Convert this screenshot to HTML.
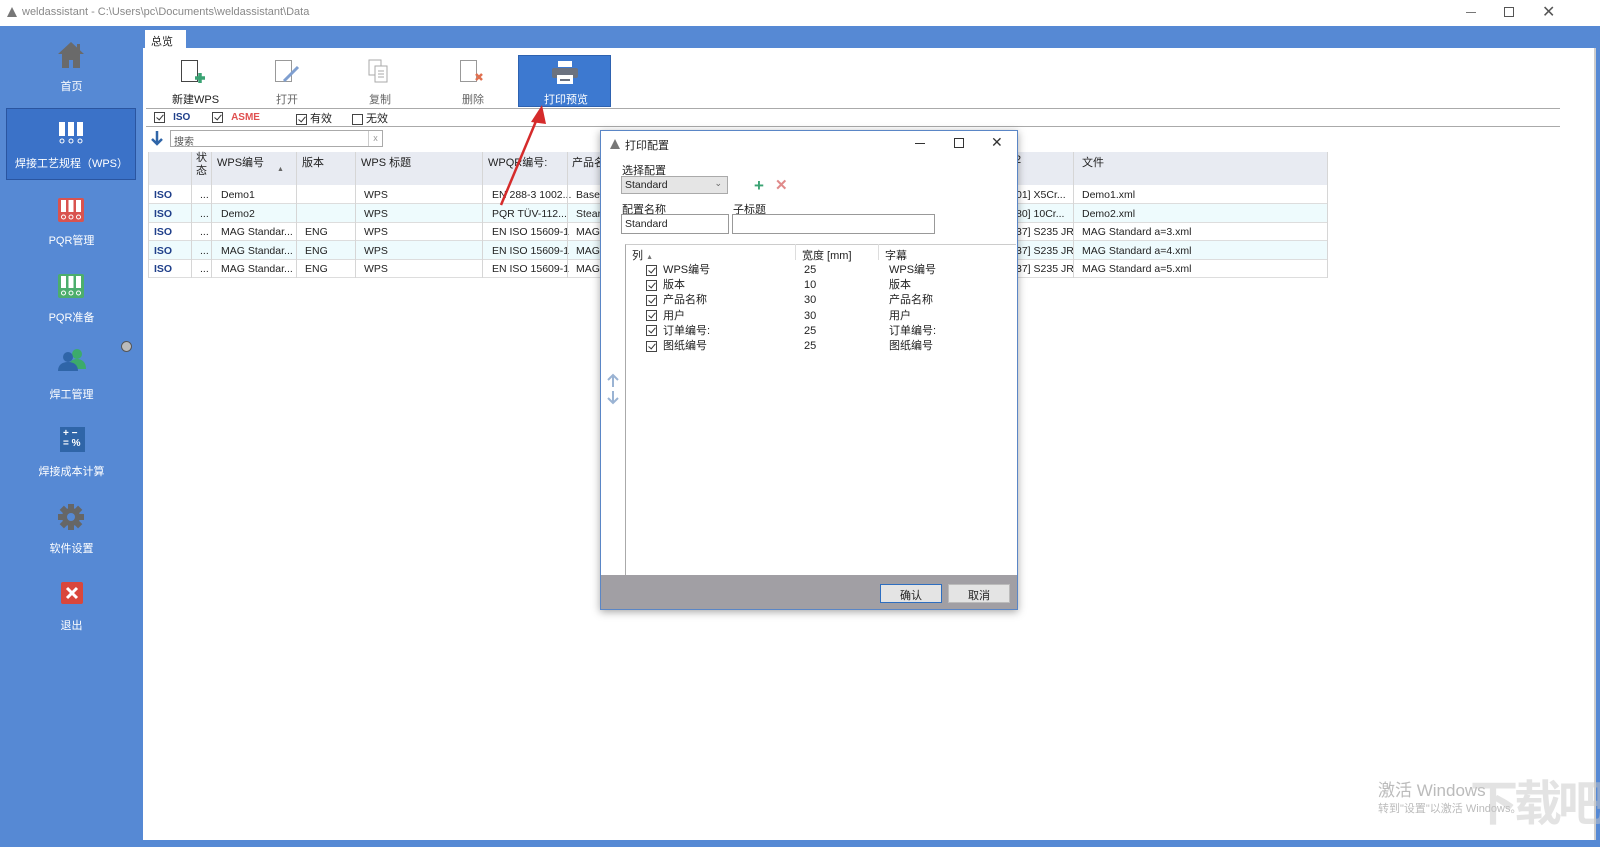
<!DOCTYPE html>
<html><head><meta charset="utf-8"><style>
*{box-sizing:border-box;margin:0;padding:0}
html,body{width:1600px;height:847px;overflow:hidden}
body{background:#fff;font-family:"Liberation Sans","Noto Sans CJK SC",sans-serif;font-size:11px;color:#222;position:relative}
.a{position:absolute;white-space:nowrap}
.side{left:0;top:26px;width:1600px;height:821px;background:#5689d4}
.nav{position:absolute;left:0;width:143px;text-align:center;color:#fff;font-size:11px}
.cb{display:inline-block;width:11px;height:11px;border:1px solid #444;background:#fff;position:relative;vertical-align:middle;margin-right:3px}
.cb::after{content:"";position:absolute;left:3px;top:0px;width:3px;height:6px;border:solid #333;border-width:0 1px 1px 0;transform:rotate(40deg)}
.cb.e::after{display:none}
.row{position:absolute;left:148px;width:1179px;height:19px;border-bottom:1px solid #ddd;font-size:10.5px}
.row span{position:absolute;top:4px;white-space:nowrap}
.hd span{position:absolute;top:2px}
.vl{position:absolute;top:152px;width:1px;height:126px;background:#d6d6d6}
</style></head><body>
<div class="a" style="left:0;top:0;width:1600px;height:26px;background:#fff"></div>
<svg class="a" style="left:6px;top:6px" width="12" height="12"><path d="M6 1L11 11H1Z" fill="#777"/></svg>
<div class="a" style="left:22px;top:6px;color:#888;font-size:11px">weldassistant - C:\Users\pc\Documents\weldassistant\Data</div>
<div class="a" style="left:1466px;top:12px;width:10px;height:1px;background:#777"></div>
<div class="a" style="left:1504px;top:7px;width:10px;height:10px;border:1px solid #555"></div>
<div class="a" style="left:1542px;top:2px;font-size:16px;color:#555">✕</div>
<div class="a side"></div>
<div class="a" style="left:145px;top:30px;width:41px;height:20px;background:#fff;font-size:11px;padding:3px 0 0 6px">总览</div>
<div class="a" style="left:143px;top:48px;width:1453px;height:792px;background:#fff;border-right:2px solid #ccc"></div>
<svg class="a" style="left:56px;top:40px" width="30" height="30"><path d="M15 2L2 14h4v14h7v-8h4v8h7V14h4z" fill="#6a6a6a"/><rect x="21" y="4" width="3" height="7" fill="#6a6a6a"/></svg>
<div class="nav" style="top:78px">首页</div>
<div class="a" style="left:6px;top:108px;width:130px;height:72px;background:#3b72c8;border:1px solid #2a55a0"></div>
<svg class="a" style="left:58px;top:122px" width="26" height="24"><g fill="#fff"><rect x="1" y="0" width="6" height="14"/><rect x="10" y="0" width="6" height="14"/><rect x="19" y="0" width="6" height="14"/></g><g fill="none" stroke="#fff"><circle cx="4" cy="19" r="2"/><circle cx="13" cy="19" r="2"/><circle cx="22" cy="19" r="2"/></g></svg>
<div class="nav" style="top:155px">焊接工艺规程（WPS）</div>
<svg class="a" style="left:58px;top:198px" width="26" height="24"><rect x="0" y="0" width="26" height="24" rx="2" fill="#d9534f"/><g fill="#fff"><rect x="3" y="2" width="5" height="12"/><rect x="10.5" y="2" width="5" height="12"/><rect x="18" y="2" width="5" height="12"/></g><g fill="none" stroke="#fff"><circle cx="5.5" cy="19" r="2"/><circle cx="13" cy="19" r="2"/><circle cx="20.5" cy="19" r="2"/></g></svg>
<div class="nav" style="top:232px">PQR管理</div>
<svg class="a" style="left:58px;top:274px" width="26" height="24"><rect x="0" y="0" width="26" height="24" rx="2" fill="#4cae6c"/><g fill="#fff"><rect x="3" y="2" width="5" height="12"/><rect x="10.5" y="2" width="5" height="12"/><rect x="18" y="2" width="5" height="12"/></g><g fill="none" stroke="#fff"><circle cx="5.5" cy="19" r="2"/><circle cx="13" cy="19" r="2"/><circle cx="20.5" cy="19" r="2"/></g></svg>
<div class="nav" style="top:309px">PQR准备</div>
<div class="a" style="left:121px;top:341px;width:11px;height:11px;border-radius:50%;background:#bbb;border:1px solid #555"></div>
<svg class="a" style="left:57px;top:347px" width="30" height="24"><circle cx="20" cy="7" r="5" fill="#3cab6b"/><path d="M11 22c0-7 4-10 9-10s9 3 9 10z" fill="#3cab6b"/><circle cx="11" cy="10" r="5" fill="#2f65a8"/><path d="M1 24c0-6 4-9 10-9s10 3 10 9z" fill="#2f65a8"/></svg>
<div class="nav" style="top:386px">焊工管理</div>
<div class="a" style="left:60px;top:427px;width:25px;height:25px;background:#2f65a8;color:#fff;font-size:10px;font-weight:bold;line-height:10px;padding:2px 0 0 3px">+ −<br>= %</div>
<div class="nav" style="top:463px">焊接成本计算</div>
<svg class="a" style="left:57px;top:503px" width="28" height="28" viewBox="-14 -14 28 28"><g fill="#666"><circle r="9"/><g id="t"><rect x="-3" y="-13" width="6" height="6"/></g><use href="#t" transform="rotate(45)"/><use href="#t" transform="rotate(90)"/><use href="#t" transform="rotate(135)"/><use href="#t" transform="rotate(180)"/><use href="#t" transform="rotate(225)"/><use href="#t" transform="rotate(270)"/><use href="#t" transform="rotate(315)"/></g><circle r="4" fill="#5689d4"/></svg>
<div class="nav" style="top:540px">软件设置</div>
<svg class="a" style="left:61px;top:582px" width="22" height="22"><rect width="22" height="22" rx="2" fill="#d9473c"/><path d="M6 6l10 10M16 6L6 16" stroke="#fff" stroke-width="3"/></svg>
<div class="nav" style="top:617px">退出</div>
<svg class="a" style="left:179px;top:59px" width="28" height="26"><rect x="2.5" y="1.5" width="16" height="21" fill="#fff" stroke="#444"/><path d="M21 14v10M16 19h10" stroke="#3aa373" stroke-width="3.5"/></svg>
<div class="a" style="left:172px;top:91px;font-size:11px">新建WPS</div>
<svg class="a" style="left:274px;top:59px" width="28" height="26"><rect x="1.5" y="1.5" width="16" height="21" fill="#fff" stroke="#999"/><path d="M10 22l14-14" stroke="#7f9fd0" stroke-width="3"/></svg>
<div class="a" style="left:276px;top:91px;color:#666">打开</div>
<svg class="a" style="left:367px;top:59px" width="26" height="26"><rect x="2" y="1" width="12" height="15" fill="#fff" stroke="#aaa"/><rect x="8" y="7" width="12" height="16" fill="#fff" stroke="#aaa"/><path d="M11 12h6M11 15h6M11 18h6" stroke="#aaa"/></svg>
<div class="a" style="left:369px;top:91px;color:#666">复制</div>
<svg class="a" style="left:459px;top:59px" width="28" height="26"><rect x="1.5" y="1.5" width="16" height="21" fill="#fff" stroke="#999"/><path d="M17 15l6 6M23 15l-6 6" stroke="#e07050" stroke-width="2.5"/></svg>
<div class="a" style="left:462px;top:91px;color:#666">删除</div>
<div class="a" style="left:518px;top:55px;width:93px;height:52px;background:#3d79d0;border:1px solid #2e62b0"></div>
<svg class="a" style="left:551px;top:60px" width="28" height="26"><rect x="7" y="1" width="14" height="6" fill="#fff"/><rect x="1" y="8" width="26" height="10" rx="2" fill="#6b7280"/><rect x="6" y="15" width="16" height="9" fill="#fff"/><rect x="9" y="19" width="10" height="2" fill="#6b7280"/></svg>
<div class="a" style="left:544px;top:91px;color:#fff">打印预览</div>
<div class="a" style="left:146px;top:108px;width:1414px;height:1px;background:#aaa"></div>
<div class="a" style="left:146px;top:126px;width:1414px;height:1px;background:#aaa"></div>
<div class="a" style="left:154px;top:111px"><span class="cb"></span> <b style="color:#1f3f8a;font-size:10px;margin-left:2px">ISO</b></div>
<div class="a" style="left:212px;top:111px"><span class="cb"></span> <b style="color:#e05050;font-size:10px;margin-left:2px">ASME</b></div>
<div class="a" style="left:296px;top:110px"><span class="cb"></span>有效</div>
<div class="a" style="left:352px;top:110px"><span class="cb e"></span>无效</div>
<svg class="a" style="left:150px;top:130px" width="14" height="16"><path d="M7 1v13M2 9l5 5 5-5" stroke="#2f65a8" stroke-width="2.5" fill="none"/></svg>
<div class="a" style="left:170px;top:130px;width:213px;height:17px;border:1px solid #aaa;color:#555;padding:2px 3px;font-size:10px">搜索</div>
<div class="a" style="left:368px;top:131px;width:14px;height:15px;border-left:1px solid #ccc;color:#999;font-size:9px;text-align:center;padding-top:2px">x</div>
<div class="a" style="left:148px;top:152px;width:1179px;height:33px;background:#e8ebf2"></div>
<div class="a hd" style="left:148px;top:152px;width:1179px;height:33px">
<span style="left:48px;top:0;line-height:13px">状<br>态</span><span style="left:69px">WPS编号</span><span style="left:129px;top:14px;font-size:7px;color:#666">▲</span><span style="left:154px">版本</span><span style="left:213px">WPS 标题</span><span style="left:340px">WPQR编号:</span><span style="left:424px">产品名</span><span style="left:867px">2</span><span style="left:934px">文件</span></div>
<div class="row" style="top:185px"><span style="left:6px;color:#1f3f8a;font-weight:bold">ISO</span><span style="left:52px">...</span><span style="left:73px">Demo1</span><span style="left:216px">WPS</span><span style="left:344px">EN 288-3 1002...</span><span style="left:428px">Basef</span><span style="left:868px">01] X5Cr...</span><span style="left:934px">Demo1.xml</span></div>
<div class="row" style="top:204px;background:#eefbfd"><span style="left:6px;color:#1f3f8a;font-weight:bold">ISO</span><span style="left:52px">...</span><span style="left:73px">Demo2</span><span style="left:216px">WPS</span><span style="left:344px">PQR TÜV-112...</span><span style="left:428px">Steam</span><span style="left:868px">80] 10Cr...</span><span style="left:934px">Demo2.xml</span></div>
<div class="row" style="top:222px"><span style="left:6px;color:#1f3f8a;font-weight:bold">ISO</span><span style="left:52px">...</span><span style="left:73px">MAG Standar...</span><span style="left:157px">ENG</span><span style="left:216px">WPS</span><span style="left:344px">EN ISO 15609-1</span><span style="left:428px">MAG</span><span style="left:868px">37] S235 JR</span><span style="left:934px">MAG Standard a=3.xml</span></div>
<div class="row" style="top:241px;background:#eefbfd"><span style="left:6px;color:#1f3f8a;font-weight:bold">ISO</span><span style="left:52px">...</span><span style="left:73px">MAG Standar...</span><span style="left:157px">ENG</span><span style="left:216px">WPS</span><span style="left:344px">EN ISO 15609-1</span><span style="left:428px">MAG</span><span style="left:868px">37] S235 JR</span><span style="left:934px">MAG Standard a=4.xml</span></div>
<div class="row" style="top:259px"><span style="left:6px;color:#1f3f8a;font-weight:bold">ISO</span><span style="left:52px">...</span><span style="left:73px">MAG Standar...</span><span style="left:157px">ENG</span><span style="left:216px">WPS</span><span style="left:344px">EN ISO 15609-1</span><span style="left:428px">MAG</span><span style="left:868px">37] S235 JR</span><span style="left:934px">MAG Standard a=5.xml</span></div>
<div class="vl" style="left:148px"></div><div class="vl" style="left:191px"></div><div class="vl" style="left:211px"></div><div class="vl" style="left:296px"></div><div class="vl" style="left:355px"></div><div class="vl" style="left:482px"></div><div class="vl" style="left:567px"></div><div class="vl" style="left:1073px"></div><div class="vl" style="left:1327px"></div>
<svg class="a" style="left:495px;top:100px" width="60" height="110"><path d="M6 105L44 14" stroke="#d52b2b" stroke-width="2.5"/><path d="M47 5L36 22L51 24Z" fill="#d52b2b"/></svg>
<div class="a" style="left:600px;top:130px;width:418px;height:480px;background:#fff;border:1px solid #5a86c6;box-shadow:0 2px 8px rgba(0,0,0,.35)"></div>
<svg class="a" style="left:609px;top:138px" width="12" height="12"><path d="M6 1L11 11H1Z" fill="#777"/></svg>
<div class="a" style="left:625px;top:137px">打印配置</div>
<div class="a" style="left:915px;top:143px;width:10px;height:1px;background:#333"></div>
<div class="a" style="left:954px;top:138px;width:10px;height:10px;border:1px solid #333"></div>
<div class="a" style="left:991px;top:134px;font-size:14px;color:#333">✕</div>
<div class="a" style="left:622px;top:162px">选择配置</div>
<div class="a" style="left:621px;top:176px;width:107px;height:18px;background:#e5e5e5;border:1px solid #aaa;padding:2px 3px;font-size:10.5px">Standard<span style="position:absolute;right:5px;top:1px;color:#666;font-size:9px">⌄</span></div>
<div class="a" style="left:754px;top:176px;color:#3aa373;font-size:17px;font-weight:bold;line-height:20px">+</div>
<div class="a" style="left:775px;top:177px;color:#e08a8a;font-size:15px;font-weight:bold;line-height:18px">✕</div>
<div class="a" style="left:622px;top:201px">配置名称</div>
<div class="a" style="left:733px;top:201px">子标题</div>
<div class="a" style="left:621px;top:214px;width:108px;height:20px;border:1px solid #999;padding:3px 3px;font-size:10.5px">Standard</div>
<div class="a" style="left:732px;top:214px;width:203px;height:20px;border:1px solid #999"></div>
<div class="a" style="left:625px;top:244px;width:391px;height:331px;border-left:1px solid #aaa;border-top:1px solid #ccc"></div>
<div class="a" style="left:632px;top:247px">列 <span style="font-size:7px;color:#777">▲</span></div>
<div class="a" style="left:795px;top:244px;width:1px;height:16px;background:#ddd"></div>
<div class="a" style="left:878px;top:244px;width:1px;height:16px;background:#ddd"></div>
<div class="a" style="left:802px;top:247px">宽度 [mm]</div>
<div class="a" style="left:885px;top:247px">字幕</div>
<div class="a" style="left:646px;top:263px;line-height:15.2px"><span class="cb"></span> WPS编号<br><span class="cb"></span> 版本<br><span class="cb"></span> 产品名称<br><span class="cb"></span> 用户<br><span class="cb"></span> 订单编号:<br><span class="cb"></span> 图纸编号</div>
<div class="a" style="left:804px;top:263px;line-height:15.2px">25<br>10<br>30<br>30<br>25<br>25</div>
<div class="a" style="left:889px;top:263px;line-height:15.2px">WPS编号<br>版本<br>产品名称<br>用户<br>订单编号:<br>图纸编号</div>
<svg class="a" style="left:606px;top:373px" width="14" height="32"><path d="M7 2v12M2 7l5-5 5 5M7 18v12M2 25l5 5 5-5" stroke="#9ab3d3" stroke-width="2" fill="none"/></svg>
<div class="a" style="left:601px;top:575px;width:416px;height:34px;background:#a19fa4"></div>
<div class="a" style="left:880px;top:584px;width:62px;height:19px;background:#e4e4e4;border:1px solid #2d6ec0;text-align:center;padding-top:2px">确认</div>
<div class="a" style="left:948px;top:584px;width:62px;height:19px;background:#e4e4e4;border:1px solid #bbb;text-align:center;padding-top:2px">取消</div>
<div class="a" style="left:1378px;top:776px;font-size:17px;color:#bbb">激活 Windows</div>
<div class="a" style="left:1378px;top:800px;font-size:11px;color:#bbb">转到"设置"以激活 Windows。</div>
<div class="a" style="left:1470px;top:775px;font-size:48px;line-height:60px;color:rgba(200,200,200,.5);font-weight:bold;letter-spacing:-4px">下载吧</div>
</body></html>
